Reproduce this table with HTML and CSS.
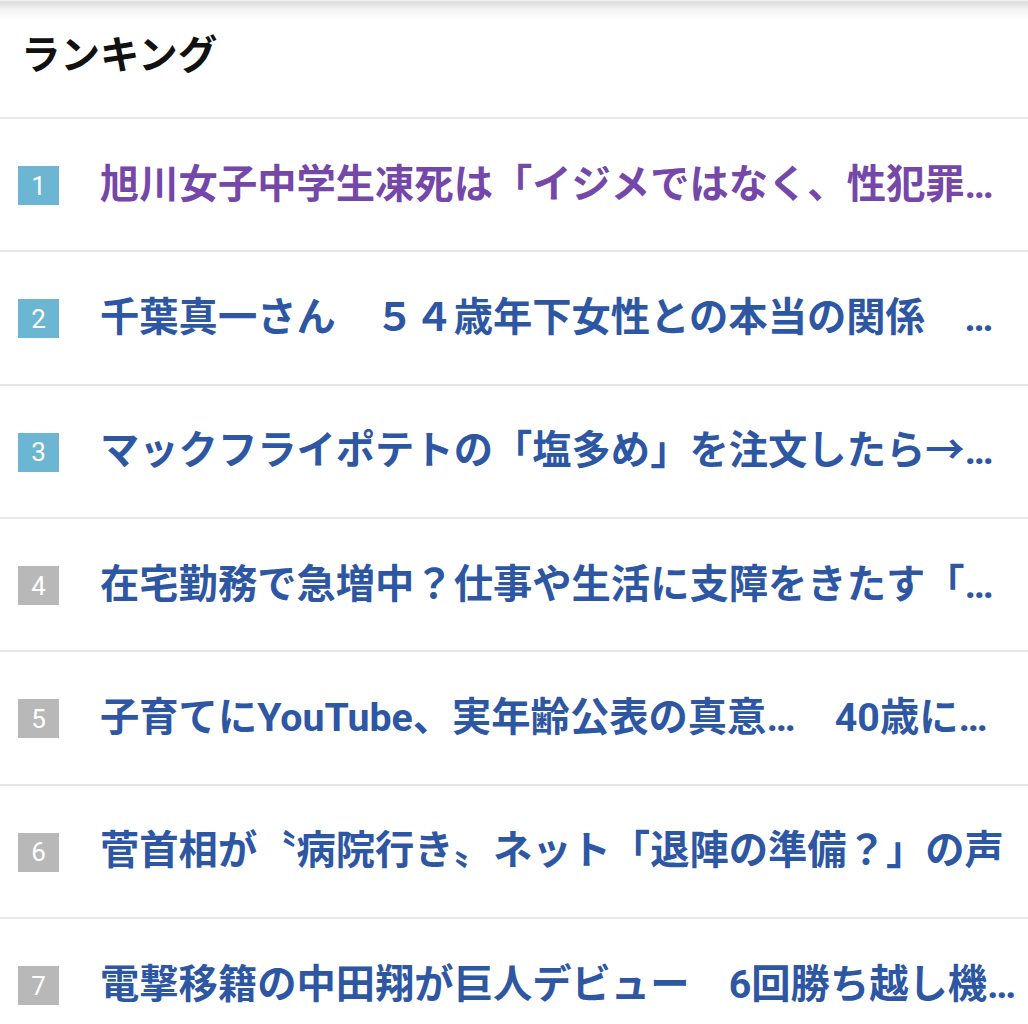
FILE: index.html
```html
<!DOCTYPE html>
<html lang="ja">
<head>
<meta charset="utf-8">
<link rel="stylesheet" href="styles.css">
</head>
<body>
<div class="page">
  <div class="topshadow"></div>
  <header class="head">
    <h2 class="head-title">ランキング</h2>
  </header>
  <ol class="ranking">
    <li class="row"><span class="badge badge-top">1</span><a class="title visited" href="#">旭川女子中学生凍死は「イジメではなく、性犯罪事件」と遺族側</a></li>
    <li class="row"><span class="badge badge-top">2</span><a class="title" href="#">千葉真一さん　５４歳年下女性との本当の関係　交際の真相</a></li>
    <li class="row"><span class="badge badge-top">3</span><a class="title" href="#">マックフライポテトの「塩多め」を注文したら→驚きの結果に</a></li>
    <li class="row"><span class="badge">4</span><a class="title" href="#">在宅勤務で急増中？仕事や生活に支障をきたす「スマホ首」</a></li>
    <li class="row"><span class="badge">5</span><a class="title" href="#">子育てにYouTube、実年齢公表の真意…　40歳になった人気ママ</a></li>
    <li class="row"><span class="badge">6</span><a class="title" href="#">菅首相が〝病院行き〟ネット「退陣の準備？」の声</a></li>
    <li class="row"><span class="badge">7</span><a class="title" href="#">電撃移籍の中田翔が巨人デビュー　6回勝ち越し機で凡退</a></li>
  </ol>
</div>
</body>
</html>
```
FILE: styles.css
```css
html, body {
  margin: 0;
  padding: 0;
  background: #ffffff;
}
.page {
  width: 1028px;
  font-family: Roboto, "Noto Sans CJK JP", sans-serif;
}
.topshadow {
  height: 20px;
  background: linear-gradient(to bottom, #f4f4f4 0px, #dcdcdc 2px, #f2f2f2 9px, #ffffff 20px);
}
.head {
  height: 97px;
  border-bottom: 2px solid #e6e6e6;
  box-sizing: content-box;
}
.head-title {
  margin: 0;
  padding: 7px 0 0 21px;
  font-size: 39.5px;
  line-height: 50px;
  font-weight: 700;
  color: #111111;
  font-family: "Noto Sans CJK JP", sans-serif;
}
.ranking {
  list-style: none;
  margin: 0;
  padding: 0;
}
.row {
  display: flex;
  align-items: center;
  gap: 41px;
  height: 131.33px;
  padding: 0 5px 0 18px;
  border-bottom: 2px solid #e6e6e6;
}
.badge {
  flex: none;
  width: 41px;
  height: 39px;
  margin-top: 2px;
  display: flex;
  align-items: center;
  justify-content: center;
  background: #b8b8b8;
  color: #ffffff;
  font-family: Roboto, sans-serif;
  font-weight: 400;
  font-size: 26px;
}
.badge-top {
  background: #6cb6d3;
}
.title {
  flex: 1;
  min-width: 0;
  white-space: nowrap;
  overflow: hidden;
  text-overflow: ellipsis;
  font-size: 39.3px;
  line-height: 52px;
  font-weight: 700;
  color: #2e57a3;
  text-decoration: none;
}
.title.visited {
  color: #7447a8;
}
```
